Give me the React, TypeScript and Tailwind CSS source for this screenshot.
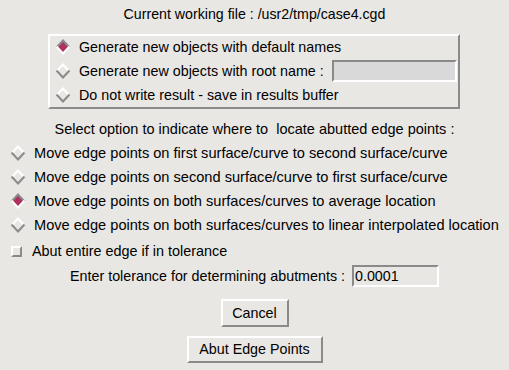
import React from "react";

const Diamond: React.FC<{ on?: boolean }> = ({ on }) => (
    <svg width="16" height="16" viewBox="0 0 16 16" className="shrink-0">
        {on && <polygon points="8,2 14,8 8,14 2,8" fill="#b03060" />}
        {/* upper edges */}
        <polyline points="1.5,8.5 8,1.5 14.5,8.5" fill="none" stroke={on ? "#8a8a8a" : "#ffffff"} strokeWidth="2" />
        {/* lower edges */}
        <polyline points="1.5,7.5 8,14.5 14.5,7.5" fill="none" stroke={on ? "#ffffff" : "#8a8a8a"} strokeWidth="2" />
    </svg>
);

const Radio: React.FC<{ on?: boolean; label: string }> = ({ on, label }) => (
    <div className="flex items-center gap-[8px] h-[24px]">
        <Diamond on={on} />
        <span className="text-[14.6px]">{label}</span>
    </div>
);

const App: React.FC = () => {
    return (
        <div
            className="w-[509px] h-[370px] bg-[#e9e7e3] text-black text-[14px] leading-none flex flex-col"
            style={{ fontFamily: '"Liberation Sans", Arial, sans-serif' }}
        >
            {/* Title */}
            <div className="h-[28px] flex items-center justify-center text-[14.2px]">Current working file : /usr2/tmp/case4.cgd</div>

            {/* Output options frame */}
            <div className="ml-[48px] mt-[6px] w-[412px] h-[75px] border-2 border-t-white border-l-white border-r-[#8a8a8a] border-b-[#8a8a8a] flex flex-col gap-[2px] pl-[5px] text-[14.3px]">
                <div className="h-[22px] flex items-center gap-[8px]">
                    <Diamond on />
                    <span>Generate new objects with default names</span>
                </div>
                <div className="h-[22px] flex items-center gap-[8px]">
                    <Diamond />
                    <span>Generate new objects with root name :</span>
                    <div className="ml-auto mr-[1px] w-[125px] h-[22px] border-2 border-t-[#8a8a8a] border-l-[#8a8a8a] border-r-white border-b-white bg-[#d9d9d9]" />
                </div>
                <div className="h-[22px] flex items-center gap-[8px]">
                    <Diamond />
                    <span>Do not write result - save in results buffer</span>
                </div>
            </div>

            <div className="mt-[10px] h-[20px] flex items-center justify-center text-[14.5px]">
                Select option to indicate where to&nbsp; locate abutted edge points :
            </div>

            {/* Location options */}
            <div className="mt-[2px] pl-[10px] flex flex-col">
                <Radio label="Move edge points on first surface/curve to second surface/curve" />
                <Radio label="Move edge points on second surface/curve to first surface/curve" />
                <Radio on label="Move edge points on both surfaces/curves to average location" />
                <Radio label="Move edge points on both surfaces/curves to linear interpolated location" />
                <div className="flex items-center gap-[10px] h-[26px] pt-[2px] pl-[1px]">
                    <div className="w-[11px] h-[11px] border-2 border-t-white border-l-white border-r-[#8a8a8a] border-b-[#8a8a8a]" />
                    <span className="text-[14.4px]">Abut entire edge if in tolerance</span>
                </div>
            </div>

            {/* Tolerance */}
            <div className="mt-[1px] h-[24px] flex items-center justify-center gap-[7px] text-[14.3px]">
                <span>Enter tolerance for determining abutments :</span>
                <div className="w-[87px] h-[22px] border-2 border-t-[#8a8a8a] border-l-[#8a8a8a] border-r-white border-b-white bg-[#e9e7e3] flex items-center pl-[1px]">
                    0.0001
                </div>
            </div>

            {/* Buttons */}
            <div className="mt-[11px] flex flex-col items-center gap-[9px] text-[14.3px]">
                <button className="w-[68px] h-[28px] border-2 border-t-white border-l-white border-r-[#8a8a8a] border-b-[#8a8a8a] bg-[#e9e7e3]">
                    Cancel
                </button>
                <button className="w-[136px] h-[27px] border-2 border-t-white border-l-white border-r-[#8a8a8a] border-b-[#8a8a8a] bg-[#e9e7e3]">
                    Abut Edge Points
                </button>
            </div>
        </div>
    );
};

export default App;
